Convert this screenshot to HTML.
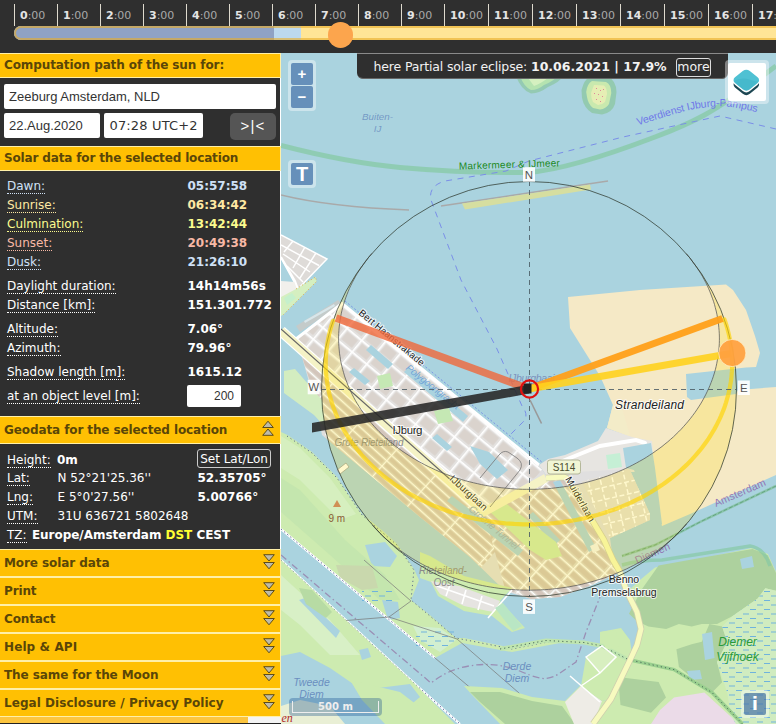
<!DOCTYPE html>
<html lang="en">
<head>
<meta charset="utf-8">
<title>SunCalc - sun position and sunlight phases</title>
<style>
html,body{margin:0;padding:0;}
body{width:776px;height:724px;overflow:hidden;background:#2f2f2f;position:relative;font-family:"DejaVu Sans","Liberation Sans",sans-serif;font-size:12px;color:#fff;}
.abs{position:absolute;}
/* timeline */
#top{position:absolute;left:0;top:0;width:776px;height:53px;background:#2f2f2f;}
.tick{position:absolute;top:4px;width:1px;height:22px;background:#dedace;}
.tl{position:absolute;top:8.5px;font-size:11px;line-height:14px;color:#a9a9a9;letter-spacing:0;white-space:nowrap;}
.tl b{color:#e4e4e4;font-weight:bold;letter-spacing:0;}
#bar{position:absolute;left:14px;top:26px;width:770px;height:14px;border-radius:7px 0 0 7px;overflow:hidden;background:#ffe596;}
#bar::after{content:"";position:absolute;left:0;top:0;right:0;bottom:0;border:2px solid rgba(232,172,40,.6);border-right:0;border-radius:7px 0 0 7px;}
#bar i{position:absolute;top:0;height:14px;display:block;}
#knob{position:absolute;left:327.8px;top:22.4px;width:25.4px;height:25.4px;border-radius:13px;background:#fca54d;}
/* sidebar */
#side{position:absolute;left:0;top:53px;width:280px;border-right:1px solid #fff;height:671px;background:#2f2f2f;}
.hd{position:absolute;left:0;width:280px;height:22.7px;background:#ffc003;border:1px solid #fff0a8;border-left:0;color:#5a4608;font-weight:bold;font-size:12px;line-height:23px;text-indent:4px;white-space:nowrap;letter-spacing:-.15px;}
.hd.m{height:25.5px;line-height:27px;border-bottom-width:1.5px;}
.inp{position:absolute;background:#fff;border-radius:2px;color:#333;height:25px;line-height:25px;white-space:nowrap;overflow:hidden;}
.row{position:absolute;left:7px;height:14px;line-height:13px;white-space:nowrap;font-size:12px;}
.row u{text-decoration:none;display:inline-block;height:13px;line-height:13px;border-bottom:1px dotted currentColor;}
.val{position:absolute;left:187.5px;height:14px;line-height:13px;font-weight:bold;white-space:nowrap;font-size:12px;}
.dawn{color:#cfe1f7;} .rise{color:#ffe9a3;} .culm{color:#fbfb8e;} .set{color:#f8b9a6;}
.arr{position:absolute;left:262.5px;top:4px;width:12px;height:16px;}
.hd.m .arr{top:3.7px;}
.hd.m .arr.up{top:3px;left:262px;}
/* map */
#map{position:absolute;left:281px;top:53px;width:495px;height:671px;background:#aad3df;overflow:hidden;}
#map svg{position:absolute;left:0;top:0;}
.olc{position:absolute;background:rgba(255,255,255,.4);border-radius:4px;padding:2px;}
.olb{display:block;margin:1px;width:22px;height:22px;background:rgba(0,60,136,.5);color:#fff;font:bold 18px/22px "Liberation Sans",sans-serif;text-align:center;border-radius:2px;}
#ban{position:absolute;left:76px;top:0;width:371px;height:24px;background:#2f2f2f;border-top:1px solid #8a8a8a;border-bottom:1px solid #666;border-radius:0 0 6px 6px;font-size:12.5px;line-height:25px;white-space:nowrap;color:#f2f2f2;}
</style>
</head>
<body>
<div id="top">
<div class="tick" style="left:14px"></div><div class="tl" style="left:20px"><b>0</b>:00</div>
<div class="tick" style="left:57px"></div><div class="tl" style="left:63px"><b>1</b>:00</div>
<div class="tick" style="left:100px"></div><div class="tl" style="left:106px"><b>2</b>:00</div>
<div class="tick" style="left:143px"></div><div class="tl" style="left:149px"><b>3</b>:00</div>
<div class="tick" style="left:186px"></div><div class="tl" style="left:192px"><b>4</b>:00</div>
<div class="tick" style="left:229px"></div><div class="tl" style="left:235px"><b>5</b>:00</div>
<div class="tick" style="left:272px"></div><div class="tl" style="left:278px"><b>6</b>:00</div>
<div class="tick" style="left:315px"></div><div class="tl" style="left:321px"><b>7</b>:00</div>
<div class="tick" style="left:358px"></div><div class="tl" style="left:364px"><b>8</b>:00</div>
<div class="tick" style="left:401px"></div><div class="tl" style="left:407px"><b>9</b>:00</div>
<div class="tick" style="left:444px"></div><div class="tl" style="left:450px"><b>10</b>:00</div>
<div class="tick" style="left:488px"></div><div class="tl" style="left:494px"><b>11</b>:00</div>
<div class="tick" style="left:532px"></div><div class="tl" style="left:538px"><b>12</b>:00</div>
<div class="tick" style="left:576px"></div><div class="tl" style="left:582px"><b>13</b>:00</div>
<div class="tick" style="left:620px"></div><div class="tl" style="left:626px"><b>14</b>:00</div>
<div class="tick" style="left:664px"></div><div class="tl" style="left:670px"><b>15</b>:00</div>
<div class="tick" style="left:708px"></div><div class="tl" style="left:714px"><b>16</b>:00</div>
<div class="tick" style="left:752px"></div><div class="tl" style="left:758px"><b>17</b>:00</div>
<div id="bar"><i style="left:0;width:260px;background:#8fa2c4"></i><i style="left:260px;width:27px;background:#bcd9ef"></i></div>
<div id="knob"></div>
</div>
<div id="side">
<div class="hd" style="top:0;letter-spacing:-.1px">Computation path of the sun for:</div>
<div class="inp" style="left:4px;top:31px;width:272px;font:13px/25px 'Liberation Sans',sans-serif;text-indent:5px">Zeeburg Amsterdam, NLD</div>
<div class="inp" style="left:4px;top:60px;width:96px;font:13px/25px 'Liberation Sans',sans-serif;text-indent:5px">22.Aug.2020</div>
<div class="inp" style="left:104px;top:60px;width:99px;font-size:13px;text-indent:5.5px;letter-spacing:.15px">07:28 UTC+2</div>
<div class="abs" style="left:230px;top:60px;width:46px;height:27px;background:#555;border-radius:5px;color:#fff;font:15px/26px 'Liberation Sans',sans-serif;text-align:center;letter-spacing:1.2px">&gt;|&lt;</div>
<div class="hd" style="top:93px">Solar data for the selected location</div>

<div class="row dawn" style="top:127px"><u>Dawn:</u></div><div class="val dawn" style="top:127px">05:57:58</div>
<div class="row rise" style="top:146px"><u>Sunrise:</u></div><div class="val rise" style="top:146px">06:34:42</div>
<div class="row culm" style="top:165px"><u>Culmination:</u></div><div class="val culm" style="top:165px">13:42:44</div>
<div class="row set" style="top:184px"><u>Sunset:</u></div><div class="val set" style="top:184px">20:49:38</div>
<div class="row dawn" style="top:203px"><u>Dusk:</u></div><div class="val dawn" style="top:203px">21:26:10</div>
<div class="row" style="top:227px"><u>Daylight duration:</u></div><div class="val" style="top:227px">14h14m56s</div>
<div class="row" style="top:246px"><u>Distance [km]:</u></div><div class="val" style="top:246px">151.301.772</div>
<div class="row" style="top:270px"><u>Altitude:</u></div><div class="val" style="top:270px">7.06°</div>
<div class="row" style="top:289px"><u>Azimuth:</u></div><div class="val" style="top:289px">79.96°</div>
<div class="row" style="top:313px"><u>Shadow length [m]:</u></div><div class="val" style="top:313px">1615.12</div>
<div class="row" style="top:337px"><u>at an object level [m]:</u></div>
<div class="inp" style="left:187px;top:332px;width:54px;height:22px;line-height:22px;font:12px/22px 'Liberation Sans',sans-serif;text-align:right;"><span style="padding-right:7px">200</span></div>

<div class="hd m" style="top:363px;letter-spacing:-.1px">Geodata for the selected location<svg class="arr up" viewBox="0 0 12 16"><path d="M6 1.2 L11.3 7.5 H0.7 Z M6 9 L11.3 15.3 H0.7 Z" fill="#bdbbaa" stroke="#5e4d18" stroke-width="1"/></svg></div>
<div class="row" style="top:400.5px"><u>Height:</u></div><div class="row" style="top:400.5px;left:57px;font-weight:bold">0m</div>
<div class="abs" style="left:197px;top:396px;width:72px;height:17px;border:1px solid #ccc;border-radius:3px;font-size:12px;line-height:18px;text-align:center;white-space:nowrap">Set Lat/Lon</div>
<div class="row" style="top:418.5px"><u>Lat:</u></div><div class="row" style="top:418.5px;left:57.5px">N 52°21'25.36''</div><div class="val" style="top:418.5px;left:197.5px">52.35705°</div>
<div class="row" style="top:437.5px"><u>Lng:</u></div><div class="row" style="top:437.5px;left:57.5px">E 5°0'27.56''</div><div class="val" style="top:437.5px;left:197.5px">5.00766°</div>
<div class="row" style="top:456.5px"><u>UTM:</u></div><div class="row" style="top:456.5px;left:57.5px">31U 636721 5802648</div>
<div class="row" style="top:475.5px"><u>TZ:</u> <b style="margin-left:1.5px;letter-spacing:-.03px">Europe/Amsterdam <span style="color:#ffff33">DST</span> CEST</b></div>

<div class="hd m" style="top:496px;letter-spacing:-0.08px">More solar data<svg class="arr" viewBox="0 0 12 16"><path d="M0.7 0.7 H11.3 L6 7 Z M0.7 8.5 H11.3 L6 14.8 Z" fill="#bdbbaa" stroke="#5e4d18" stroke-width="1"/></svg></div>
<div class="hd m" style="top:524px;letter-spacing:-0.15px">Print<svg class="arr" viewBox="0 0 12 16"><path d="M0.7 0.7 H11.3 L6 7 Z M0.7 8.5 H11.3 L6 14.8 Z" fill="#bdbbaa" stroke="#5e4d18" stroke-width="1"/></svg></div>
<div class="hd m" style="top:552px;letter-spacing:-0.15px">Contact<svg class="arr" viewBox="0 0 12 16"><path d="M0.7 0.7 H11.3 L6 7 Z M0.7 8.5 H11.3 L6 14.8 Z" fill="#bdbbaa" stroke="#5e4d18" stroke-width="1"/></svg></div>
<div class="hd m" style="top:580px;letter-spacing:0.1px">Help &amp; API<svg class="arr" viewBox="0 0 12 16"><path d="M0.7 0.7 H11.3 L6 7 Z M0.7 8.5 H11.3 L6 14.8 Z" fill="#bdbbaa" stroke="#5e4d18" stroke-width="1"/></svg></div>
<div class="hd m" style="top:608px;letter-spacing:-0.09px">The same for the Moon<svg class="arr" viewBox="0 0 12 16"><path d="M0.7 0.7 H11.3 L6 7 Z M0.7 8.5 H11.3 L6 14.8 Z" fill="#bdbbaa" stroke="#5e4d18" stroke-width="1"/></svg></div>
<div class="hd m" style="top:636px;letter-spacing:0.05px">Legal Disclosure / Privacy Policy<svg class="arr" viewBox="0 0 12 16"><path d="M0.7 0.7 H11.3 L6 7 Z M0.7 8.5 H11.3 L6 14.8 Z" fill="#bdbbaa" stroke="#5e4d18" stroke-width="1"/></svg></div>

<div class="abs" style="left:0;top:664px;width:281px;height:6px;background:#fcc53f"></div><div class="abs" style="left:248px;top:664px;width:33px;height:7px;background:#f4f4f4"></div><div class="abs" style="left:0;top:670px;width:281px;height:1px;background:#222"></div>

</div>
<div id="map">
<svg width="495" height="671" viewBox="281 53 495 671" font-family="'DejaVu Sans','Liberation Sans',sans-serif">
<defs>
<pattern id="grid" width="19" height="15" patternUnits="userSpaceOnUse"><rect width="19" height="15" fill="#e3e1df"/><rect x="3.2" y="3.2" width="13.6" height="9.6" fill="#dad3cd"/><path d="M0 0.7H19M0.7 0V15" stroke="#fff" stroke-width="1.9"/></pattern>
<pattern id="strip" width="46" height="7.2" patternUnits="userSpaceOnUse"><rect width="46" height="7.2" fill="#dfdad0"/><rect x="1.5" y="2" width="43" height="4" fill="#d3c5bb"/><path d="M0 0.6H46M0.5 0V7.2" stroke="#fff" stroke-width="1.2"/></pattern>
<pattern id="cgrid" width="26" height="9" patternUnits="userSpaceOnUse"><rect width="26" height="9" fill="#dfdad0"/><rect x="2" y="2.2" width="22" height="5.4" fill="#d3c5bb"/><path d="M0 0.6H26M0.6 0V9" stroke="#fff" stroke-width="1.4"/></pattern>
<pattern id="marsh" width="14" height="9" patternUnits="userSpaceOnUse"><path d="M1 2H7M8 6.5H14" stroke="#6fb3dd" stroke-width="1"/></pattern>
<clipPath id="mapclip"><rect x="281" y="53" width="495" height="671"/></clipPath>
</defs>
<g clip-path="url(#mapclip)">
<rect x="281" y="53" width="495" height="671" fill="#aad3df"/>
<!-- ===== top water features ===== -->
<path d="M281 145.5C310 153 350 163 400 167.5S480 173 528 172.5C560 170 600 158 655 137S720 105 745 89L776 66" fill="none" stroke="#86c9a4" stroke-opacity=".75" stroke-width="5"/>
<path d="M281 195Q330 207 409 210M441 206L608 181" fill="none" stroke="#a9a9a9" stroke-width="1.5"/>
<polygon points="462,203.5 590,184.5 591,189.5 465,209.5" fill="#d6dea0"/>
<path d="M776 129L720 116L623 137L529 161L506 171L445 181Q428 186 431 200L461 280L497 349L522 406Q530 416 522 423L505 440" fill="none" stroke="#7a8ee8" stroke-width="1" stroke-dasharray="6 5.5"/>
<!-- Pampus -->
<path d="M590 76L608 77Q616 80 616.5 92L615 104Q612 113 602 114.5L592 113Q584 108 582 98L581.5 90Q584 80 590 76Z" fill="#8fc8a8" fill-opacity=".85"/>
<path d="M592 81L606 82Q611 84 611.3 93L609 104Q606 109 600 109.4L593 108Q588 104 587 97L586.2 92Q587 84 592 81Z" fill="#c9e9ae"/>
<path d="M594 85L604 85.5Q607 88 607 94L605 102Q602 105 598 105L593 102Q591 98 591 93Z" fill="#e6eeb4"/>
<g fill="#e08a9a"><rect x="596" y="88" width="1" height="1"/><rect x="600" y="90" width="1" height="1"/><rect x="598" y="94" width="1" height="1"/><rect x="602" y="96" width="1" height="1"/><rect x="596" y="99" width="1" height="1"/><rect x="600" y="101" width="1" height="1"/><rect x="603" y="89" width="1" height="1"/><rect x="594" y="93" width="1" height="1"/></g>
<path d="M516 76L563 76Q560 82 548 87Q540 93 531 93.5Q521 90 516 76Z" fill="#8fc8a8" fill-opacity=".8"/>
<path d="M520 76L558 76Q552 82 544 85Q538 90 531 90Q524 87 520 76Z" fill="#b5e3b0"/>
<path d="M528 78L548 78Q540 84 534 86Z" fill="#d5f0c0"/>
<!-- ===== Steigereiland ===== -->
<g>
<polygon points="281,235 327,259 298,289 281,258" fill="#dedbd8"/>
<g stroke="#fff" stroke-width="1.5" fill="none"><path d="M281 235L327 259L298 289L281 258M281 245L319 265.5M283 254L310 272M293 241L284 252M305 247L293 268M316 253L300 278M287 266L303 282"/></g>
<polygon points="281,281 295,282 298,289 281,298" fill="#f1f0ec"/>
<path d="M281 257L295 281L298 289" fill="none" stroke="#fff" stroke-width="2"/>
<polygon points="296,289 315.6,277 316.5,281.5 283.5,314.5 281,316 281,297" fill="#d5efc0"/>
<polygon points="284,298 292,293 296,298 287,305" fill="#c5f0cc"/>
<path d="M296 289L315.6 277L316.5 281.5L283.5 314.5" fill="none" stroke="#e0b050" stroke-width="1" stroke-dasharray="1 2.5"/>
</g>
<!-- pier -->
<polygon points="296,326 338,300 342,304 300,332" fill="#c9c9c7" fill-opacity=".85"/>
<polygon points="304,321 334,304 335,306 305,323" fill="#d8e6ea"/>
<!-- ===== sand (Strandeiland) ===== -->
<polygon points="568,297 640,290 726,284.5 733,290 746,310 755,336 760,353 756,367 746,367.5 686,374 687,397 691,400 736,394 738,390 776,387 776,475 689,514.5 662,526 655,500 652,460 632,438 607,428 613,405 600,376 570,328" fill="#f5e9c6"/>
<!-- connection area -->
<polygon points="539,465 548,459 565,455 598,441 606,428 632,437 652,441 655,472 575,472 548,478" fill="#e7e5e1"/>
<polygon points="607,428 613,405 622,408 630,436" fill="#f3ecc8"/>
<path d="M560 462L600 446L636 440L645 443" fill="none" stroke="#fff" stroke-width="4" stroke-linecap="round"/>
<polygon points="623,448 651,443 655,468 662,524 648,531 641,490 634,470 626,468" fill="#aad3df"/>
<polygon points="606,455 620,453 622,467 608,469" fill="#c5efd5"/>
<!-- ===== main land ===== -->
<polygon points="342,303.5 539,465 548,478 575,472 629.5,469 650,514 650,520 610,538 613,560 620,572 592,585 560,597 531,599 505,591 470,557 420,517 365,471 335,446 322,435 317,410 300,350 296,339" fill="#e0dfdf"/>
<!-- Haveneiland texture -->
<clipPath id="hv"><polygon points="342,303.5 539,465 546,470 484,512 296,343 296,339"/></clipPath>
<g clip-path="url(#hv)"><g transform="translate(342 303.5) rotate(39.7)"><rect x="-40" y="0" width="300" height="75" fill="url(#grid)"/></g>
<g fill="#aad3df"><polygon points="366,350 371,345 393,364 388,369"/><polygon points="404,372 409,367 468,416 463,422"/><polygon points="470,446 489,452 508,470 497,479 480,464"/><polygon points="349,372 354,368 370,381 365,385"/><polygon points="432,438 437,434 452,447 447,451"/></g>
<g fill="#c5e8b4"><polygon points="377,376 390,373 393,386 380,389"/><polygon points="434,411 449,408 453,421 438,424"/></g>
</g>
<path d="M296 339L342 303.5L539 465" fill="none" stroke="#fff" stroke-width="3"/>
<path d="M345 301L543 463" fill="none" stroke="#6f86e6" stroke-width=".8" stroke-dasharray="2 2"/>
<!-- Grote Rieteiland strips -->
<clipPath id="gr"><polygon points="300,350 484,512 520,545 505,591 470,557 420,517 365,471 335,446 326,438 322,420"/></clipPath>
<g clip-path="url(#gr)"><g transform="translate(342 303.5) rotate(42)"><rect x="-20" y="55" width="300" height="90" fill="url(#strip)"/></g></g>
<!-- Haveneiland-Oost texture -->
<clipPath id="ho"><polygon points="484,512 546,478 566,478 613,560 620,572 592,585 560,597 531,599 505,589"/></clipPath>
<g clip-path="url(#ho)"><g transform="translate(484 512) rotate(42)"><rect x="-60" y="-80" width="220" height="160" fill="url(#cgrid)"/></g>
<g fill="#aad3df"><polygon points="528,516 533,512 560,540 555,545"/><polygon points="553,482 560,480 596,548 589,552"/></g>
</g>
<polygon points="447,501 452,496 523,550 518,556" fill="#aad3df"/>
<!-- Groene tunnel park -->
<polygon points="486,508 504,502 556,542 562,556 546,560 530,550" fill="#cdebb0"/>
<polygon points="337,470 346,463 349,467 340,474" fill="#fff" stroke="#888" stroke-width=".6"/>
<!-- Kleine Rieteiland -->
<polygon points="284,371 295,369 322,400 325,427 314,415 284,393" fill="#d3edc0"/>
<!-- Centrumeiland texture -->
<clipPath id="ce"><polygon points="581.5,481.5 629.5,469 650,514 650,520 610,538"/></clipPath>
<g clip-path="url(#ce)"><rect x="570" y="460" width="90" height="90" fill="#e4e0d6"/><g transform="rotate(-13 578 481)"><path d="M570 493H660M570 505H660M570 517H660M570 529H660M570 541H660M570 553H660M588 470V570M600 470V570M612 470V570M624 470V570M636 470V570M648 470V570" stroke="#fff" stroke-width="1.5" stroke-dasharray="5 2.5" fill="none"/></g></g>
<polygon points="590,546 597,543 600,550 593,553" fill="#f4f4f0"/>
<!-- IJburglaan boulevard -->
<path d="M281 331L484 512" fill="none" stroke="#fff" stroke-width="11"/>
<path d="M281 331L484 512L546 478" fill="none" stroke="#f5f3c6" stroke-width="8.5" stroke-linejoin="round"/>
<path d="M281 329L480 506" fill="none" stroke="#666" stroke-width="1.1"/>
<path d="M490 507L520 470Q524 463 517 458L508 452Q503 450 499 455L480 478" fill="none" stroke="#777" stroke-width=".8"/>
<!-- ===== Rieteiland-Oost ===== -->
<polygon points="420,552 430,556 464,576 512,588 500,601 525,628 512,632 492,616 464,611 438,596 431,582 420,578" fill="#cdebb0"/>
<polygon points="431,581 459,586 500,601 494,612 488,611 464,606 440,594" fill="#e6e4e1"/>
<path d="M437 586L494 606M450 585L446 596M466 590L462 604M482 596L478 610M512 590L488 618" stroke="#fff" stroke-width="1.6" fill="none"/>
<polygon points="495,608 503,603 522,626 513,631" fill="#b9e6c4"/>
<!-- ===== Diemerpark ===== -->
<polygon points="281,432 287.5,435 312,452 337,477 362,514 384,532 397,544 414,569 419,580 411,600 431,616 456,638 464,638 512,648 558,639 560,643 512,652 462,643 435,658 281,529" fill="#cdebb0"/>
<polygon points="281,436 300,448 330,478 356,514 340,520 300,480 281,468" fill="#d6efbf"/>
<polygon points="365,545 385,542 397,556 390,567 372,566" fill="#aad3df"/>
<polygon points="281,478 300,490 345,540 385,575 400,600 380,600 330,555 281,512" fill="#c4e6ae"/><polygon points="336,565 372,566 378,588 362,590 340,578" fill="#c9d8ad"/><polygon points="382,600 398,602 400,618 388,620" fill="#aad3df"/>
<polygon points="413,626 440,628 456,640 440,652 420,640" fill="#d2efd0"/>
<rect x="416" y="628" width="38" height="20" fill="url(#marsh)"/>
<rect x="362" y="588" width="30" height="16" fill="url(#marsh)"/>
<path d="M287 436L312 453L337 478L362 515L397 545L414 570L411 600L456 638L512 649L558 640" fill="none" stroke="#5f6f8f" stroke-width="1" stroke-dasharray="1.2 3"/>
<!-- canal banks -->
<path d="M281 529L435 658M281 560L415 684L460 724" fill="none" stroke="#fff" stroke-width="2.2"/>
<path d="M281 529L435 658M281 560L415 684L460 724" fill="none" stroke="#6a6aa0" stroke-width="1" stroke-dasharray="1.5 2.5"/>
<path d="M281 555L431 683Q445 672 460 668T489 664.5Q505 665 522 672T545 678.5Q553 678 560 673L576 662L586 632L600 597" fill="none" stroke="#9a8fb5" stroke-width="1.3" stroke-dasharray="7 3 1.5 3"/>
<path d="M281 627L340 621L389 617L411 601L364 560M389 617L457 639L519 693L545 720M435 658L473 690L520 724" fill="none" stroke="#777" stroke-width=".7"/>
<!-- ===== south land ===== -->
<polygon points="281,560 415,684 455,724 281,724" fill="#cdebb0"/>
<polygon points="281,575 330,620 360,655 330,655 300,625 281,610" fill="#d8f0c6"/>
<polygon points="281,656 300,652 330,668 362,690 410,684 420,697 388,724 281,724" fill="#aad3df"/>
<polygon points="299,600 305,598 340,631 336,638" fill="#aad3df"/><polygon points="359,650 368,648 371,657 362,660" fill="#aad3df"/><polygon points="299,588 312,590 332,612 326,618 306,604" fill="#b7dba4"/>
<polygon points="350,680 400,692 430,715 420,724 385,724 362,700" fill="#cdebb0"/>
<polygon points="281,706 300,700 330,706 345,724 281,724" fill="#e9efd5"/>
<!-- bottom middle land -->
<polygon points="464,686 502,688 532,697 565,701 581,685 602,701 611,699 620,701 620,724 500,724 474,697" fill="#cdebb0"/>
<polygon points="470,692 500,692 532,701 562,706 575,724 505,724 480,702" fill="#add19e"/>
<polygon points="565,702 581,686 602,701 593,724 574,724" fill="#eeece6"/>
<polygon points="609,702 620,700 620,724 606,724" fill="#aad3df"/>
<polygon points="600,632 621,628 630,640 632,655 622,680 611,699 602,701 581,686 586,657 600,646" fill="#cdebb0"/>
<polygon points="586,657 602,646 616,657 600,673" fill="#d8efc0"/>
<path d="M500 649L546 640.5L584 642.5L602 646L628 659.5" fill="none" stroke="#bfe5b0" stroke-width="4"/>
<path d="M500 649L546 640.5L584 642.5L602 646L628 659.5" fill="none" stroke="#4a6a5a" stroke-width="1" stroke-dasharray="1.2 3"/>
<polygon points="600,632 615,630 621,646 606,650" fill="#cdebb0"/>
<path d="M586 657L602 646L616 657L600 673ZM600 673L581 686M570 676L600 702" fill="none" stroke="#fff" stroke-width="1.5"/>
<!-- ===== Diemer Vijfhoek ===== -->
<polygon points="627,592 640,580 655,567.5 700,559 752,548 768,554 776,572 776,724 593,724 611,699 630,660 637,645 641,629 637,612" fill="#cdebb0"/>
<polygon points="658.6,565.4 700,558 752.6,548.9 767.9,555.2 776,573 776,590.8 765.3,588.3 757.7,598.4 732.3,616.2 717,623.9 701.8,623.9 691.6,626.4 678.9,623.9 666.2,628.9 648.4,626.4 637,621.3 629,613.7 640.8,590.8" fill="#add19e"/>
<polygon points="676.4,649.3 691.6,644.2 701.8,641.7 709.4,623.9 722.1,626.4 727.2,641.7 717,662 722.1,682.3 712,692.5 691.6,677.2 678.9,667" fill="#add19e"/>
<polygon points="618,677 658.6,682 666,697.5 651,712.8 620.5,705" fill="#add19e"/>
<polygon points="757.7,598.4 765.3,588.3 776,590.8 776,724 732.3,724 727.2,692.5 717,662 727.2,641.7 722.1,626.4 732.3,616.2" fill="#d0ecc0"/>
<polygon points="757.7,598.4 765.3,588.3 776,590.8 776,724 732.3,724 727.2,692.5 717,662 727.2,641.7 722.1,626.4 732.3,616.2" fill="url(#marsh)"/>
<polygon points="651,724 660,710 674,697.5 704.4,692.5 732.3,718 736,724" fill="#ebdbe8"/>
<polygon points="702,634 712,632 714.5,658 705,660" fill="#aad3df"/>
<polygon points="687,671 700,670 702,679 690,680" fill="#aad3df"/>
<polygon points="740,559 752,556 754,567 742,569" fill="#aad3df"/>
<path d="M628 659.5L674 669.6L712 692.5L742.5 724" fill="none" stroke="#9ad08f" stroke-width="3.5"/>
<path d="M628 659.5L674 669.6L712 692.5L742.5 724" fill="none" stroke="#4a6a5a" stroke-width="1" stroke-dasharray="1.2 3"/>
<path d="M622 565Q640 560 662 560L700 554L750 546Q764 548 770 566" fill="none" stroke="#86c9a4" stroke-opacity=".7" stroke-width="3.5"/>
<!-- admin boundary -->
<path d="M776 486L704 520L655 545L622 556" fill="none" stroke="#7fc09a" stroke-width="2.5" stroke-opacity=".75"/>
<path d="M776 486L704 520L655 545L622 556" fill="none" stroke="#5a9a78" stroke-width=".8" stroke-dasharray="4 2"/>
<!-- Muiderlaan + bridge road -->
<path d="M546 478L564 477L566.5 478L604 540L613 560L620 572L627 592L637 612L641 629L637 645L630 660L611 699L593 724" fill="none" stroke="#cfcfae" stroke-width="6.5" stroke-linejoin="round"/>
<path d="M546 478L564 477L566.5 478L604 540L613 560L620 572L627 592L637 612L641 629L637 645L630 660L611 699L593 724" fill="none" stroke="#f7fabf" stroke-width="5" stroke-linejoin="round"/>
<text x="281.5" y="721.5" font-family="'Liberation Serif',serif" font-style="italic" font-size="12" fill="#b02a2a">en</text>

<!-- ===== labels ===== -->
<g font-family="'Liberation Sans','DejaVu Sans',sans-serif" font-size="10.5" stroke-linejoin="round">
<g fill="#6b8fbf" font-style="italic" text-anchor="middle"><text x="377.5" y="120" font-size="9.8" fill-opacity=".85">Buiten-</text><text x="377.5" y="132" font-size="9.8" fill-opacity=".85">IJ</text>
<text x="531.5" y="382" font-size="10.5" fill="#7d93bd" textLength="46">IJburgbaai</text>
<text x="517" y="670" font-size="10.5">Derde</text><text x="517" y="682" font-size="10.5">Diem</text>
<text x="311.5" y="686" font-size="10.5">Tweede</text><text x="311.5" y="698" font-size="10.5">Diem</text>
</g>
<text x="459" y="169.5" fill="#1b8a22" font-size="10" transform="rotate(-1.8 459 169.5)" textLength="101">Markermeer &amp; IJmeer</text>
<path id="pferry" d="M638 125.5L668 116Q705 104 732 107L760 112.5" fill="none"/>
<text fill="#6f78e8" font-size="10.5"><textPath href="#pferry" textLength="122">Veerdienst IJburg-Pampus</textPath></text>
<g paint-order="stroke" stroke="#fff" stroke-width="2" stroke-opacity=".8">
<text x="358" y="314" fill="#222" font-size="9.8" transform="rotate(39.7 358 314)" textLength="82">Bert Haanstrakade</text>
<text x="449" y="479.5" fill="#222" font-size="9.8" transform="rotate(42.5 449 479.5)" textLength="47">IJburglaan</text>
<text x="565" y="479" fill="#222" font-size="9.8" transform="rotate(60.5 565 479)" textLength="50">Muiderlaan</text>
<text x="392.5" y="433.5" fill="#222" font-size="11.5" textLength="30">IJburg</text>
<text x="624" y="582.5" fill="#222" font-size="10.5" text-anchor="middle">Benno</text>
<text x="624" y="595.5" fill="#222" font-size="10.5" text-anchor="middle">Premselabrug</text>
<text x="615" y="408.5" fill="#222" font-size="12" font-style="italic" textLength="69">Strandeiland</text>
</g>
<text x="405" y="369" fill="#6b9fd6" font-style="italic" font-size="10" transform="rotate(38.5 405 369)" textLength="66" fill-opacity=".9">Polygoongracht</text>
<text x="334.5" y="446" fill="#8a8a8a" font-style="italic" font-size="10" textLength="69">Grote Rieteiland</text>
<text x="468" y="510" fill="#9bb0c0" font-style="italic" font-size="10" transform="rotate(40 468 510)" textLength="62">Groene Tunnel</text>
<g fill="#8a8a8a" font-style="italic" text-anchor="middle" font-size="10"><text x="443" y="573.5">Rieteiland-</text><text x="444" y="585.5">Oost</text></g>
<rect x="547.5" y="460" width="33" height="14" rx="2.5" fill="#f1f5d5" stroke="#b5b89a" stroke-width="1"/>
<text x="564" y="471" fill="#4a4d30" font-size="10" text-anchor="middle">S114</text>
<text x="716" y="507" fill="#9276b3" font-size="10.5" transform="rotate(-23.5 716 507)" textLength="55">Amsterdam</text>
<text x="637" y="564" fill="#9276b3" font-size="10.5" transform="rotate(-24 637 564)" textLength="37">Diemen</text>
<g fill="#2a9a3a" font-style="italic" font-size="12" text-anchor="middle"><text x="737.5" y="646">Diemer</text><text x="737.5" y="661">Vijfhoek</text></g>
<path d="M333 507L337 500L341 507Z" fill="#d08f55"/>
<text x="328.5" y="521.5" fill="#8a5a36" font-size="10">9 m</text>
</g>

<polygon points="686.3,253.6 688.6,256.4 690.8,259.1 692.9,262.0 695.0,264.8 697.0,267.7 698.9,270.6 700.8,273.6 702.5,276.5 704.2,279.6 705.8,282.6 707.3,285.7 708.7,288.8 710.0,291.9 711.2,295.0 712.4,298.2 713.5,301.3 714.5,304.5 715.3,307.7 716.2,311.0 716.9,314.2 717.5,317.5 718.0,320.7 718.5,324.0 718.8,327.3 719.1,330.5 719.3,333.8 719.4,337.1 719.4,340.4 719.3,343.7 719.1,347.0 718.8,350.3 718.4,353.5 718.0,356.8 717.4,360.1 716.8,363.3 716.1,366.6 715.3,369.8 714.4,373.0 713.4,376.2 712.3,379.4 711.1,382.5 709.9,385.6 708.5,388.8 707.1,391.8 705.6,394.9 704.0,397.9 702.3,401.0 700.6,403.9 698.7,406.9 696.8,409.8 694.8,412.7 692.7,415.5 690.6,418.3 688.3,421.1 686.0,423.8 683.6,426.5 681.2,429.2 678.6,431.8 676.0,434.3 673.4,436.9 670.6,439.3 667.8,441.8 664.9,444.1 662.0,446.5 659.0,448.7 655.9,450.9 652.8,453.1 649.6,455.2 646.4,457.3 643.1,459.3 639.7,461.2 636.3,463.1 632.9,464.9 629.4,466.7 625.8,468.4 622.2,470.0 618.6,471.6 614.9,473.1 611.2,474.6 607.4,476.0 603.6,477.3 599.8,478.5 595.9,479.7 592.0,480.8 588.0,481.9 584.1,482.9 580.1,483.8 576.1,484.7 572.0,485.4 568.0,486.1 563.9,486.8 559.8,487.3 555.7,487.8 551.6,488.3 547.5,488.6 543.3,488.9 539.2,489.1 535.0,489.3 530.9,489.3 526.7,489.3 522.6,489.3 518.4,489.1 514.3,488.9 510.2,488.6 506.0,488.2 501.9,487.8 497.8,487.3 493.7,486.7 489.7,486.1 485.6,485.4 481.6,484.6 477.6,483.7 473.6,482.8 469.6,481.8 465.7,480.8 461.8,479.6 457.9,478.4 454.1,477.2 450.3,475.8 446.5,474.5 442.8,473.0 439.1,471.5 435.5,469.9 431.9,468.2 428.3,466.5 424.8,464.8 421.4,462.9 418.0,461.1 414.6,459.1 411.3,457.1 408.1,455.0 404.9,452.9 401.8,450.8 398.7,448.5 395.7,446.3 392.8,443.9 389.9,441.6 387.1,439.1 384.4,436.7 381.7,434.1 379.1,431.6 376.6,429.0 374.2,426.3 371.8,423.6 369.5,420.9 367.3,418.1 365.1,415.3 363.0,412.4 361.0,409.5 359.1,406.6 357.3,403.7 355.5,400.7 353.9,397.7 352.3,394.7 350.8,391.6 349.4,388.5 348.0,385.4 346.8,382.2 345.6,379.1 344.5,375.9 343.6,372.7 342.7,369.5 341.9,366.3 341.1,363.0 340.5,359.8 340.0,356.5 339.5,353.3 339.2,350.0 338.9,346.7 338.7,343.4 338.6,340.1 338.6,336.8 338.7,333.6 338.9,330.3 339.2,327.0 339.6,323.7 340.0,320.4 340.6,317.2 341.2,313.9 341.9,310.7 342.7,307.5 343.6,304.3 344.6,301.1 345.7,297.9 346.9,294.7 348.1,291.6 349.4,288.5 350.9,285.4 352.4,282.3 354.0,279.3 355.6,276.3 357.4,273.3 359.2,270.4 361.2,267.4 363.2,264.6 365.2,261.7 367.4,258.9 369.6,256.1 371.9,253.4 371.9,253.4 367.2,259.1 362.7,265.0 358.3,271.0 354.2,277.1 350.3,283.5 346.7,289.9 343.3,296.5 340.1,303.1 337.1,309.9 334.5,316.8 332.0,323.8 329.8,330.9 327.9,338.0 326.2,345.3 324.7,352.5 323.6,359.8 322.6,367.2 322.0,374.6 321.6,382.0 321.5,389.4 321.6,396.8 322.1,404.2 322.7,411.5 323.7,418.9 324.9,426.2 326.3,433.5 328.0,440.7 330.0,447.8 332.2,454.9 334.7,461.8 337.4,468.7 340.4,475.5 343.6,482.2 347.0,488.7 350.7,495.2 354.6,501.5 358.7,507.6 363.1,513.6 367.6,519.5 372.4,525.1 372.4,525.2 374.8,527.9 377.3,530.5 379.9,533.1 382.5,535.7 385.2,538.2 387.9,540.6 390.7,543.0 393.6,545.4 396.6,547.7 399.6,550.0 402.7,552.2 405.8,554.3 409.0,556.4 412.3,558.5 415.6,560.5 418.9,562.4 422.3,564.3 425.8,566.1 429.3,567.8 432.9,569.5 436.5,571.2 440.1,572.7 443.8,574.2 447.6,575.7 451.3,577.0 455.1,578.3 459.0,579.6 462.9,580.8 466.8,581.9 470.7,582.9 474.7,583.9 478.7,584.8 482.7,585.6 486.7,586.4 490.8,587.1 494.8,587.7 498.9,588.3 503.0,588.7 507.2,589.2 511.3,589.5 515.4,589.8 519.6,590.0 523.7,590.1 527.9,590.2 532.0,590.1 536.2,590.0 540.3,589.9 544.5,589.7 548.6,589.4 552.7,589.0 556.8,588.5 560.9,588.0 565.0,587.4 569.1,586.8 573.1,586.0 577.2,585.3 581.2,584.4 585.2,583.4 589.1,582.4 593.0,581.4 596.9,580.2 600.8,579.0 604.6,577.8 608.4,576.4 612.2,575.0 615.9,573.5 619.6,572.0 623.2,570.4 626.8,568.8 630.3,567.0 633.8,565.3 637.2,563.4 640.6,561.5 644.0,559.6 647.3,557.5 650.5,555.5 653.6,553.4 656.8,551.2 659.8,548.9 662.8,546.7 665.7,544.3 668.6,541.9 671.4,539.5 674.1,537.0 676.7,534.5 679.3,531.9 681.8,529.3 684.3,526.6 686.6,523.9 686.8,523.8 691.5,518.1 695.9,512.3 700.2,506.3 704.2,500.1 708.1,493.8 711.7,487.4 715.0,480.9 718.2,474.3 721.1,467.5 723.7,460.6 726.2,453.7 728.3,446.7 730.2,439.6 731.9,432.4 733.3,425.2 734.5,418.0 735.4,410.7 736.0,403.3 736.4,396.0 736.5,388.6 736.4,381.3 736.0,373.9 735.3,366.6 734.4,359.3 733.2,352.1 731.8,344.9 730.1,337.7 728.1,330.6 725.9,323.6 723.5,316.7 720.8,309.8 717.9,303.1 714.7,296.4 711.3,289.9 707.7,283.5 703.8,277.3 699.8,271.1 695.5,265.2 691.0,259.3 686.3,253.7" fill="#ffdc00" fill-opacity=".2"/>
<polyline points="686.3,253.6 688.6,256.4 690.8,259.1 692.9,262.0 695.0,264.8 697.0,267.7 698.9,270.6 700.8,273.6 702.5,276.5 704.2,279.6 705.8,282.6 707.3,285.7 708.7,288.8 710.0,291.9 711.2,295.0 712.4,298.2 713.5,301.3 714.5,304.5 715.3,307.7 716.2,311.0 716.9,314.2 717.5,317.5 718.0,320.7 718.5,324.0 718.8,327.3 719.1,330.5 719.3,333.8 719.4,337.1 719.4,340.4 719.3,343.7 719.1,347.0 718.8,350.3 718.4,353.5 718.0,356.8 717.4,360.1 716.8,363.3 716.1,366.6 715.3,369.8 714.4,373.0 713.4,376.2 712.3,379.4 711.1,382.5 709.9,385.6 708.5,388.8 707.1,391.8 705.6,394.9 704.0,397.9 702.3,401.0 700.6,403.9 698.7,406.9 696.8,409.8 694.8,412.7 692.7,415.5 690.6,418.3 688.3,421.1 686.0,423.8 683.6,426.5 681.2,429.2 678.6,431.8 676.0,434.3 673.4,436.9 670.6,439.3 667.8,441.8 664.9,444.1 662.0,446.5 659.0,448.7 655.9,450.9 652.8,453.1 649.6,455.2 646.4,457.3 643.1,459.3 639.7,461.2 636.3,463.1 632.9,464.9 629.4,466.7 625.8,468.4 622.2,470.0 618.6,471.6 614.9,473.1 611.2,474.6 607.4,476.0 603.6,477.3 599.8,478.5 595.9,479.7 592.0,480.8 588.0,481.9 584.1,482.9 580.1,483.8 576.1,484.7 572.0,485.4 568.0,486.1 563.9,486.8 559.8,487.3 555.7,487.8 551.6,488.3 547.5,488.6 543.3,488.9 539.2,489.1 535.0,489.3 530.9,489.3 526.7,489.3 522.6,489.3 518.4,489.1 514.3,488.9 510.2,488.6 506.0,488.2 501.9,487.8 497.8,487.3 493.7,486.7 489.7,486.1 485.6,485.4 481.6,484.6 477.6,483.7 473.6,482.8 469.6,481.8 465.7,480.8 461.8,479.6 457.9,478.4 454.1,477.2 450.3,475.8 446.5,474.5 442.8,473.0 439.1,471.5 435.5,469.9 431.9,468.2 428.3,466.5 424.8,464.8 421.4,462.9 418.0,461.1 414.6,459.1 411.3,457.1 408.1,455.0 404.9,452.9 401.8,450.8 398.7,448.5 395.7,446.3 392.8,443.9 389.9,441.6 387.1,439.1 384.4,436.7 381.7,434.1 379.1,431.6 376.6,429.0 374.2,426.3 371.8,423.6 369.5,420.9 367.3,418.1 365.1,415.3 363.0,412.4 361.0,409.5 359.1,406.6 357.3,403.7 355.5,400.7 353.9,397.7 352.3,394.7 350.8,391.6 349.4,388.5 348.0,385.4 346.8,382.2 345.6,379.1 344.5,375.9 343.6,372.7 342.7,369.5 341.9,366.3 341.1,363.0 340.5,359.8 340.0,356.5 339.5,353.3 339.2,350.0 338.9,346.7 338.7,343.4 338.6,340.1 338.6,336.8 338.7,333.6 338.9,330.3 339.2,327.0 339.6,323.7 340.0,320.4 340.6,317.2 341.2,313.9 341.9,310.7 342.7,307.5 343.6,304.3 344.6,301.1 345.7,297.9 346.9,294.7 348.1,291.6 349.4,288.5 350.9,285.4 352.4,282.3 354.0,279.3 355.6,276.3 357.4,273.3 359.2,270.4 361.2,267.4 363.2,264.6 365.2,261.7 367.4,258.9 369.6,256.1 371.9,253.4" fill="none" stroke="#555" stroke-opacity=".75" stroke-width="1"/>
<polyline points="686.6,523.9 684.3,526.6 681.8,529.3 679.3,531.9 676.7,534.5 674.1,537.0 671.4,539.5 668.6,541.9 665.7,544.3 662.8,546.7 659.8,548.9 656.8,551.2 653.6,553.4 650.5,555.5 647.3,557.5 644.0,559.6 640.6,561.5 637.2,563.4 633.8,565.3 630.3,567.0 626.8,568.8 623.2,570.4 619.6,572.0 615.9,573.5 612.2,575.0 608.4,576.4 604.6,577.8 600.8,579.0 596.9,580.2 593.0,581.4 589.1,582.4 585.2,583.4 581.2,584.4 577.2,585.3 573.1,586.0 569.1,586.8 565.0,587.4 560.9,588.0 556.8,588.5 552.7,589.0 548.6,589.4 544.5,589.7 540.3,589.9 536.2,590.0 532.0,590.1 527.9,590.2 523.7,590.1 519.6,590.0 515.4,589.8 511.3,589.5 507.2,589.2 503.0,588.7 498.9,588.3 494.8,587.7 490.8,587.1 486.7,586.4 482.7,585.6 478.7,584.8 474.7,583.9 470.7,582.9 466.8,581.9 462.9,580.8 459.0,579.6 455.1,578.3 451.3,577.0 447.6,575.7 443.8,574.2 440.1,572.7 436.5,571.2 432.9,569.5 429.3,567.8 425.8,566.1 422.3,564.3 418.9,562.4 415.6,560.5 412.3,558.5 409.0,556.4 405.8,554.3 402.7,552.2 399.6,550.0 396.6,547.7 393.6,545.4 390.7,543.0 387.9,540.6 385.2,538.2 382.5,535.7 379.9,533.1 377.3,530.5 374.8,527.9 372.4,525.2" fill="none" stroke="#555" stroke-opacity=".75" stroke-width="1"/>
<circle cx="529" cy="389" r="207.5" fill="none" stroke="#2f3a2f" stroke-opacity=".75" stroke-width="1"/>
<polyline points="724.4,319.3 725.6,322.6 726.7,326.1 727.6,329.5 728.5,332.9 729.3,336.4 730.0,339.8 730.6,343.3 731.1,346.8 731.5,350.3 731.8,353.8 732.0,357.3 732.1,360.8 732.2,364.4 732.1,367.9 731.9,371.4 731.6,374.9 731.3,378.4 730.8,381.9 730.2,385.4 729.6,388.8 728.8,392.3 728.0,395.7 727.0,399.2 726.0,402.6 724.9,406.0 723.7,409.4 722.3,412.7 720.9,416.1 719.4,419.4 717.8,422.6 716.2,425.9 714.4,429.1 712.5,432.3 710.6,435.5 708.6,438.6 706.4,441.7 704.2,444.7 702.0,447.7 699.6,450.7 697.1,453.6 694.6,456.5 692.0,459.4 689.3,462.2 686.6,464.9 683.7,467.6 680.8,470.3 677.8,472.9 674.8,475.4 671.7,477.9 668.5,480.3 665.2,482.7 661.9,485.1 658.5,487.3 655.0,489.5 651.5,491.7 648.0,493.8 644.4,495.8 640.7,497.8 636.9,499.7 633.2,501.5 629.3,503.3 625.5,505.0 621.5,506.6 617.6,508.2 613.6,509.7 609.5,511.1 605.4,512.5 601.3,513.8 597.1,515.0 592.9,516.1 588.7,517.2 584.5,518.2 580.2,519.1 575.9,520.0 571.5,520.7 567.2,521.4 562.8,522.1 558.5,522.6 554.1,523.1 549.7,523.5 545.2,523.8 540.8,524.0 536.4,524.2 532.0,524.3 527.5,524.3 523.1,524.3 518.7,524.1 514.2,523.9 509.8,523.6 505.4,523.3 501.0,522.8 496.6,522.3 492.2,521.7 487.9,521.0 483.6,520.3 479.3,519.5 475.0,518.6 470.7,517.6 466.5,516.6 462.3,515.5 458.1,514.3 453.9,513.0 449.8,511.7 445.8,510.3 441.8,508.8 437.8,507.3 433.8,505.7 429.9,504.0 426.1,502.2 422.3,500.4 418.5,498.6 414.8,496.6 411.2,494.6 407.6,492.6 404.1,490.4 400.6,488.3 397.2,486.0 393.9,483.7 390.6,481.3 387.4,478.9 384.2,476.5 381.1,473.9 378.1,471.4 375.2,468.7 372.3,466.0 369.5,463.3 366.8,460.5 364.2,457.7 361.6,454.9 359.2,451.9 356.8,449.0 354.4,446.0 352.2,443.0 350.1,439.9 348.0,436.8 346.0,433.6 344.1,430.5 342.3,427.3 340.6,424.0 339.0,420.8 337.5,417.5 336.0,414.1 334.7,410.8 333.4,407.4 332.3,404.1 331.2,400.6 330.2,397.2 329.3,393.8 328.5,390.3 327.9,386.9 327.3,383.4 326.8,379.9 326.4,376.4 326.1,372.9 325.8,369.4 325.7,365.9 325.7,362.4 325.8,358.9 326.0,355.4 326.3,351.9 326.6,348.4 327.1,344.9 327.7,341.4 328.3,337.9 329.1,334.5 329.9,331.0 330.9,327.6 331.9,324.2 333.0,320.8" fill="none" stroke="#ffd400" stroke-opacity=".65" stroke-width="4.2" stroke-linecap="round"/>
<path d="M529.5 181V597M321 389.5H737" stroke="#4a5a64" stroke-width="1" stroke-dasharray="5 4" fill="none" stroke-opacity=".85"/>
<path d="M530 400L541.5 423.5" stroke="#999" stroke-width="1.6"/>
<path d="M529 389L336 318" stroke="#f0683a" stroke-opacity=".8" stroke-width="7.6"/>
<path d="M529 389L722.5 318.5" stroke="#ffa019" stroke-opacity=".95" stroke-width="7"/>
<path d="M529 389L731 353.5" stroke="#ffd21e" stroke-opacity=".9" stroke-width="7"/>
<polygon points="312,423 529.3,384.8 529.3,393.6 312,432.4" fill="#262626" fill-opacity=".88"/>
<circle cx="732.3" cy="353" r="13.6" fill="#ffa040" fill-opacity=".93" stroke="#fff3d0" stroke-opacity=".7" stroke-width="1"/>
<rect x="523.5" y="383.5" width="8" height="10" fill="#222"/>
<circle cx="529.5" cy="389" r="8.6" fill="none" stroke="#e01010" stroke-width="2.2"/>
<rect x="523" y="167.2" width="12" height="14.5" fill="#fff" fill-opacity=".9"/><text x="529" y="178.5" font-size="11.5" text-anchor="middle" fill="#555" font-family="'Liberation Sans',sans-serif">N</text>
<rect x="523" y="599.4" width="12" height="14.5" fill="#fff" fill-opacity=".9"/><text x="529" y="610.6999999999999" font-size="11.5" text-anchor="middle" fill="#555" font-family="'Liberation Sans',sans-serif">S</text>
<rect x="307.7" y="379.8" width="12" height="14.5" fill="#fff" fill-opacity=".9"/><text x="313.7" y="391.1" font-size="11.5" text-anchor="middle" fill="#555" font-family="'Liberation Sans',sans-serif">W</text>
<rect x="737.8" y="380.5" width="12" height="14.5" fill="#fff" fill-opacity=".9"/><text x="743.8" y="391.8" font-size="11.5" text-anchor="middle" fill="#555" font-family="'Liberation Sans',sans-serif">E</text>
</g>
</svg>
<div class="olc" style="left:7px;top:7px"><div class="olb" style="font-size:15px">+</div><div class="olb" style="margin-top:1px;font-size:15px">−</div></div>
<div class="olc" style="left:7px;top:107px"><div class="olb" style="font-size:20px;line-height:23px">T</div></div>
<div id="ban"><span style="margin-left:16.5px;letter-spacing:-.15px">here Partial solar eclipse: </span><b>10.06.2021 | 17.9%</b><span style="position:absolute;left:319px;top:4px;width:33px;height:17px;border:1px solid #ddd;border-radius:3px;line-height:16px;text-align:center;font-size:12.5px">more</span></div>
<div class="olc" style="left:444px;top:7px"><div class="olb" style="width:38px;height:38px;background:#fff"><svg width="38" height="38" viewBox="0 0 38 38"><g transform="translate(21.3 3.2)"><rect x="-10.5" y="-10.5" width="21" height="21" rx="5" fill="#1d4753" transform="translate(0 21.4) scale(1 .806) rotate(45)"/><rect x="-10.5" y="-10.5" width="21" height="21" rx="5" fill="#fff" transform="translate(0 18.8) scale(1 .806) rotate(45)"/><rect x="-10.5" y="-10.5" width="21" height="21" rx="5" fill="#4fc1d3" transform="translate(0 17) scale(1 .806) rotate(45)"/><path d="M-12.3 17.8Q-5 13.5 3 16.3T12.3 17.8Q11 20 3.5 26Q0 28.3 -3.5 26Q-11 20 -12.3 17.8Z" fill="#3db2c6" fill-opacity=".5"/></g></svg></div></div>
<div class="olc" style="left:8px;top:645px;width:89px;height:14px;background:rgba(0,60,136,.3);padding:2px"><div style="margin:1px;height:11px;border:1px solid #eee;border-top:none;color:#eee;font:bold 10px/11px 'DejaVu Sans',sans-serif;text-align:center">500 m</div></div>
<div class="olc" style="left:460px;top:637px"><div class="olb" style="font:bold 17px/22px 'DejaVu Sans',sans-serif">i</div></div>

</div>
</body>
</html>
